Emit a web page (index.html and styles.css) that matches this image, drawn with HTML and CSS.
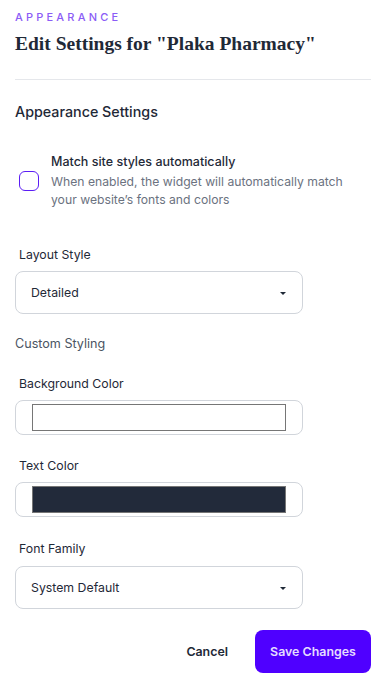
FILE: index.html
```html
<!DOCTYPE html>
<html>
<head>
<meta charset="utf-8">
<link rel="stylesheet" href="styles.css">
</head>
<body>
<div class="page">
  <div class="eyebrow">APPEARANCE</div>
  <h1 class="title">Edit Settings for "Plaka Pharmacy"</h1>
  <div class="divider"></div>
  <h2 class="section-title">Appearance Settings</h2>

  <div class="check-row">
    <span class="checkbox"></span>
    <div class="check-text">
      <div class="check-label">Match site styles automatically</div>
      <div class="check-desc">When enabled, the widget will automatically match your website’s fonts and colors</div>
    </div>
  </div>

  <div class="field field-layout">
    <div class="field-label">Layout Style</div>
    <div class="select"><span>Detailed</span><span class="caret"></span></div>
  </div>

  <div class="subhead">Custom Styling</div>

  <div class="field field-bg">
    <div class="field-label">Background Color</div>
    <div class="color-box"><span class="swatch swatch-white"></span></div>
  </div>

  <div class="field field-text">
    <div class="field-label">Text Color</div>
    <div class="color-box"><span class="swatch swatch-dark"></span></div>
  </div>

  <div class="field field-font">
    <div class="field-label">Font Family</div>
    <div class="select"><span>System Default</span><span class="caret"></span></div>
  </div>

  <div class="actions">
    <button class="btn-cancel">Cancel</button>
    <button class="btn-save">Save Changes</button>
  </div>
</div>
</body>
</html>
```

FILE: styles.css
```css
* { box-sizing: border-box; }
html, body { margin: 0; padding: 0; background: #ffffff; }
body {
  font-family: Inter, "Noto Sans", sans-serif;
  color: #1f2937;
  -webkit-font-smoothing: antialiased;
}
.page {
  padding: 9px 14px 0 15px;
  display: flex;
  flex-direction: column;
}
.eyebrow {
  font-size: 11px;
  line-height: 16px;
  letter-spacing: 3.2px;
  color: #8b5cf6;
  font-weight: 500;
}
.title {
  margin: 7px 0 0;
  font-family: "Liberation Serif", "Times New Roman", serif;
  font-weight: 700;
  font-size: 19.5px;
  line-height: 24px;
  color: #1f2937;
}
.divider {
  margin-top: 23px;
  height: 1px;
  background: #e5e7eb;
  width: 356px;
}
.section-title {
  margin: 22px 0 0;
  font-size: 14.3px;
  line-height: 20px;
  font-weight: 500;
  color: #1f2937;
}
.check-row {
  display: flex;
  align-items: center;
  margin-top: 31px;
  padding-left: 4px;
}
.checkbox {
  width: 20px;
  height: 20px;
  border: 1.5px solid #5b1cf5;
  border-radius: 6px;
  flex: none;
  margin-right: 12px;
}
.check-label {
  font-size: 12.5px;
  line-height: 18px;
  font-weight: 500;
  color: #1f2937;
  margin-bottom: 2px;
}
.check-desc {
  font-size: 12.2px;
  line-height: 18px;
  color: #6b7280;
  width: 300px;
}
.field { display: flex; flex-direction: column; }
.field-label {
  padding-left: 4px;
  font-size: 12.3px;
  line-height: 18px;
  color: #1f2937;
  margin-bottom: 8px;
}
.field-layout { margin-top: 37px; }
.field-layout .field-label { margin-bottom: 7px; }
.field-bg { margin-top: 22px; }
.field-text { margin-top: 22px; }
.field-font { margin-top: 23px; }
.select {
  width: 288px;
  height: 43px;
  border: 1px solid #d1d5db;
  border-radius: 8px;
  display: flex;
  align-items: center;
  justify-content: space-between;
  padding: 0 16px 0 15px;
  font-size: 12.3px;
  color: #1f2937;
}
.caret {
  width: 0; height: 0;
  border-left: 3px solid transparent;
  border-right: 3px solid transparent;
  border-top: 3.5px solid #1f2937;
  margin-top: 2px;
}
.subhead {
  margin-top: 21px;
  font-size: 12.6px;
  line-height: 18px;
  color: #4b5563;
}
.color-box {
  margin-top: -1px;
  width: 288px;
  height: 35px;
  border: 1px solid #d1d5db;
  border-radius: 8px;
  padding: 3px 16px 3px 16px;
  display: flex;
}
.swatch {
  display: block;
  width: 254px;
  height: 27px;
  border: 1px solid #767676;
}
.swatch-white { background: #ffffff; }
.swatch-dark { background: #222a3a; }
.actions {
  margin-top: 21px;
  display: flex;
  justify-content: flex-end;
  align-items: center;
  width: 356px;
}
.btn-cancel {
  border: none;
  background: none;
  font-family: Inter, sans-serif;
  font-size: 12.4px;
  font-weight: 600;
  color: #1f2937;
  padding: 0;
  margin-right: 27px;
}
.btn-save {
  width: 116px;
  height: 43px;
  border: none;
  border-radius: 8px;
  background: #4f00ff;
  color: #e4ddff;
  font-family: Inter, sans-serif;
  font-size: 12.4px;
  font-weight: 600;
  padding: 0;
}
```
